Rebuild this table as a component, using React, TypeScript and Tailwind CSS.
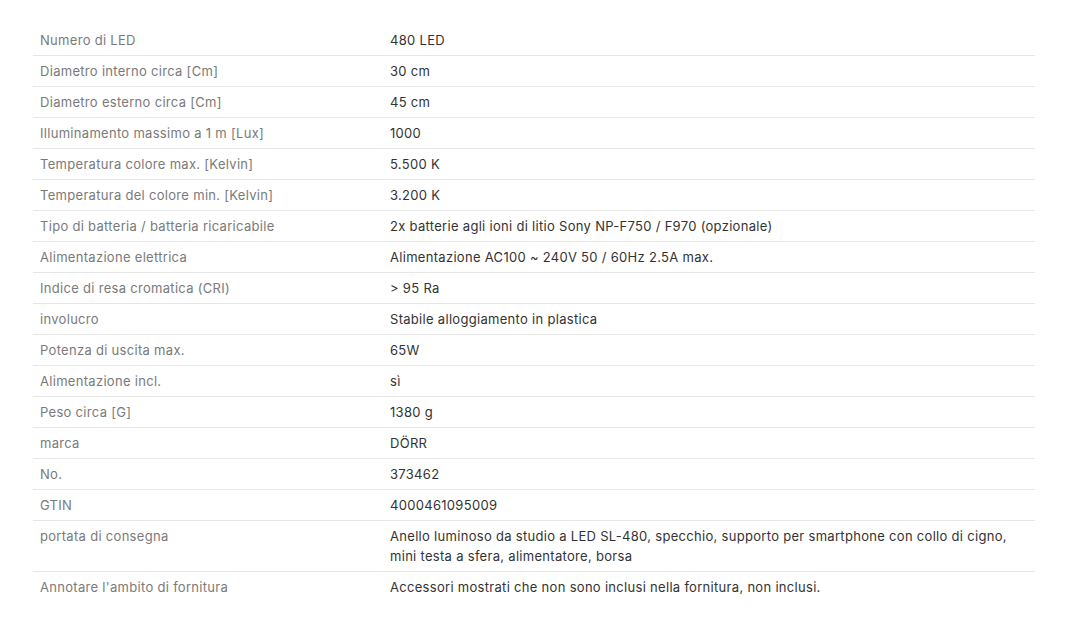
const specs: [string, string][] = [
  ["Numero di LED", "480 LED"],
  ["Diametro interno circa [Cm]", "30 cm"],
  ["Diametro esterno circa [Cm]", "45 cm"],
  ["Illuminamento massimo a 1 m [Lux]", "1000"],
  ["Temperatura colore max. [Kelvin]", "5.500 K"],
  ["Temperatura del colore min. [Kelvin]", "3.200 K"],
  ["Tipo di batteria / batteria ricaricabile", "2x batterie agli ioni di litio Sony NP-F750 / F970 (opzionale)"],
  ["Alimentazione elettrica", "Alimentazione AC100 ~ 240V 50 / 60Hz 2.5A max."],
  ["Indice di resa cromatica (CRI)", "> 95 Ra"],
  ["involucro", "Stabile alloggiamento in plastica"],
  ["Potenza di uscita max.", "65W"],
  ["Alimentazione incl.", "sì"],
  ["Peso circa [G]", "1380 g"],
  ["marca", "DÖRR"],
  ["No.", "373462"],
  ["GTIN", "4000461095009"],
  [
    "portata di consegna",
    "Anello luminoso da studio a LED SL-480, specchio, supporto per smartphone con collo di cigno, mini testa a sfera, alimentatore, borsa",
  ],
  ["Annotare l'ambito di fornitura", "Accessori mostrati che non sono inclusi nella fornitura, non inclusi."],
];

export default function App() {
  return (
    <div className="min-h-screen bg-white pt-[25px] pl-[33px] pr-[34px] font-['Inter','Liberation_Sans',sans-serif] text-[13px] leading-5 tracking-[0.3px]">
      <div className="flex flex-col">
        {specs.map(([label, value], i) => (
          <div
            key={label}
            className={`flex py-[5px] ${i < specs.length - 1 ? "border-b border-[#e6e6e6]" : ""}`}
          >
            <div className="w-[350px] shrink-0 pl-[7px] pr-4 text-[#7a7a7a]">{label}</div>
            <div className="flex-1 pl-[7px] pr-6 text-[#333333]">{value}</div>
          </div>
        ))}
      </div>
    </div>
  );
}
